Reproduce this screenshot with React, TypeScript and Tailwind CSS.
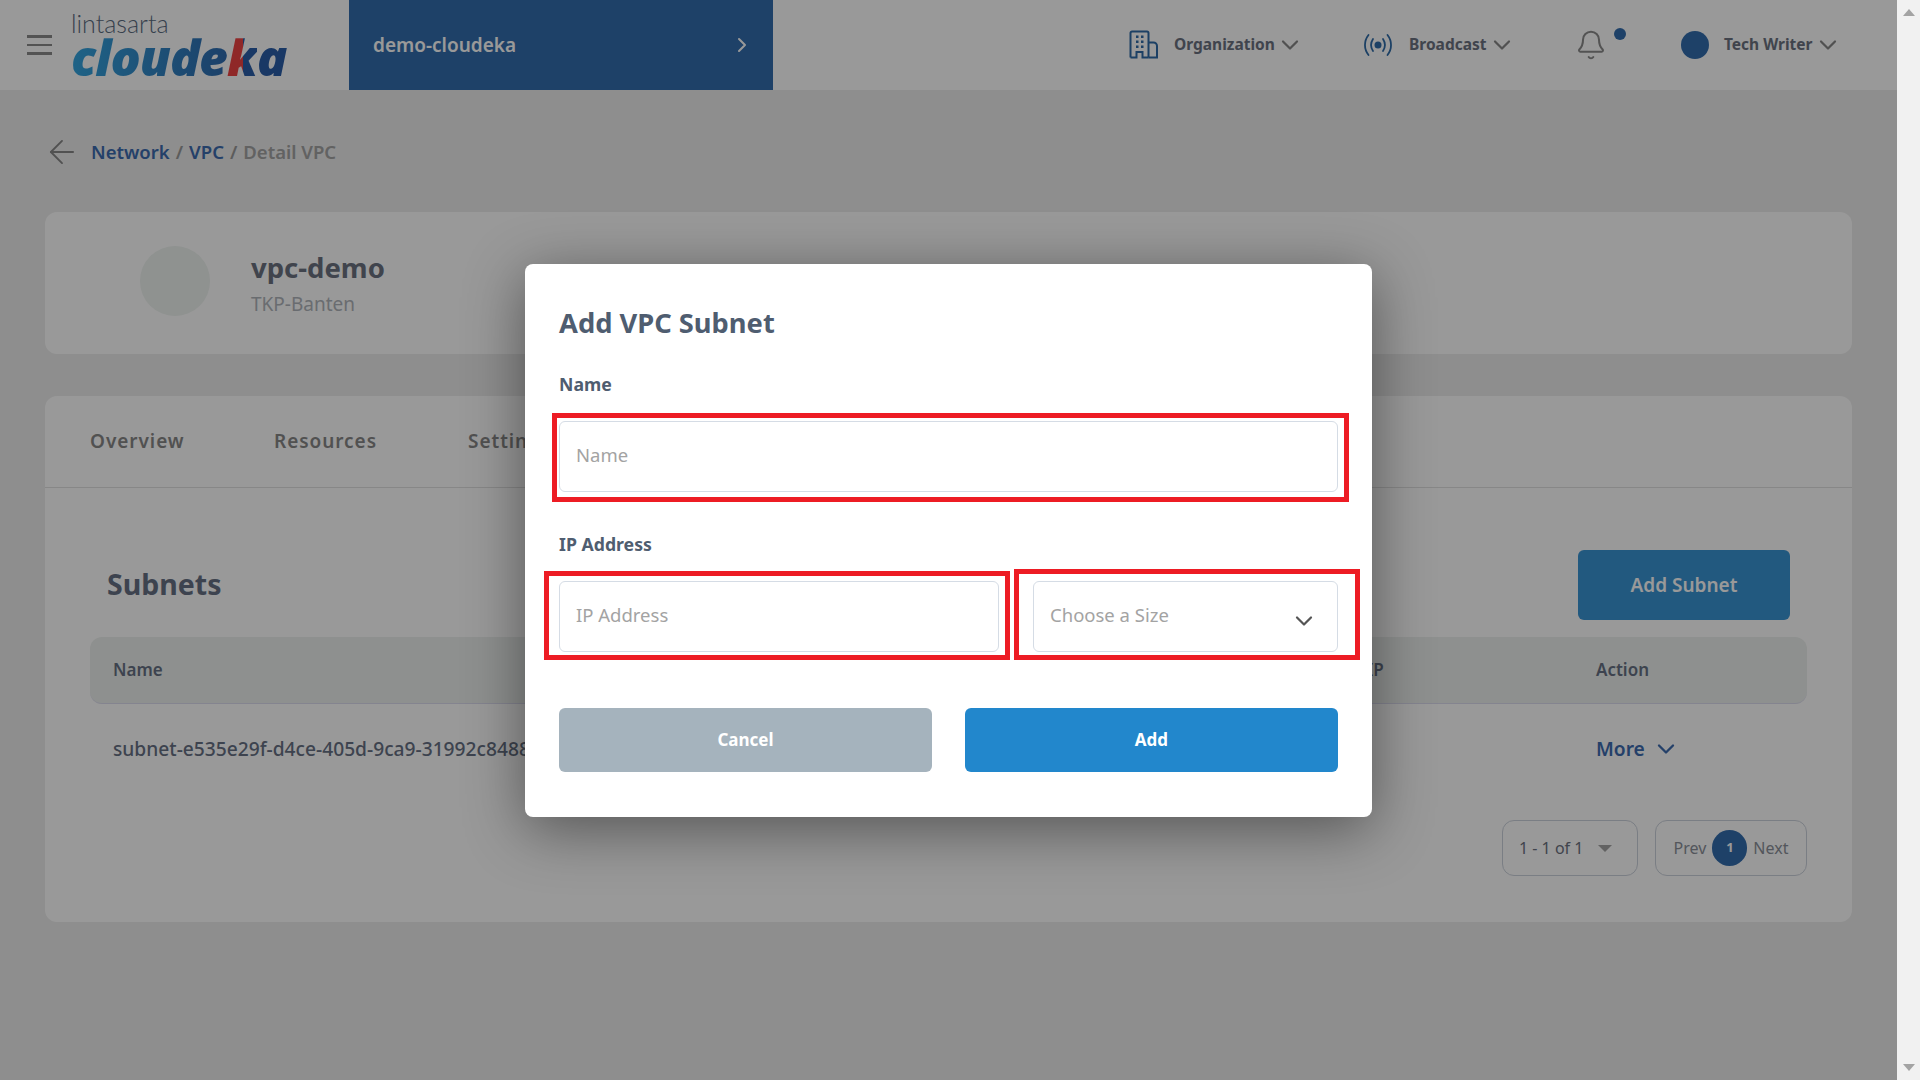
import { ArrowLeft, Bell, ChevronDown, ChevronRight } from 'lucide-react';

const FONT = "font-['Noto_Sans',sans-serif]";

function BuildingIcon() {
  return (
    <svg width="30" height="30" viewBox="0 0 30 30" fill="none" stroke="#2f6ca8" strokeWidth="2" className="shrink-0">
      <path d="M1.5 27.5V3a1.5 1.5 0 0 1 1.5-1.5h15a1.5 1.5 0 0 1 1.500 1.500V27.500" />
      <path d="M19.500 12.500h5a3.500 3.500 0 0 1 3.500 3.500v11.500H19.500" />
      <path d="M1.500 27.500h6V22h6v5.500h6" />
      <g stroke="none" fill="#2f6ca8">
        <rect x="7" y="5.500" width="2.500" height="2.500" />
        <rect x="12" y="5.500" width="2.500" height="2.500" />
        <rect x="7" y="10.500" width="2.500" height="2.500" />
        <rect x="12" y="10.500" width="2.500" height="2.500" />
        <rect x="7" y="15.500" width="2.500" height="2.500" />
        <rect x="12" y="15.500" width="2.500" height="2.500" />
      </g>
    </svg>
  );
}

function BroadcastIcon() {
  return (
    <svg width="30" height="24" viewBox="0 0 30 24" fill="none" stroke="#2f6ca8" strokeWidth="1.800" strokeLinecap="round" className="shrink-0">
      <path d="M5.500 2C.800 8 .800 16 5.500 22" />
      <path d="M10 6c-2.600 4-2.600 8 0 12" />
      <path d="M20 6c2.600 4 2.600 8 0 12" />
      <path d="M24.500 2c4.700 6 4.700 14 0 20" />
      <circle cx="15" cy="12" r="3.500" fill="#2f6ca8" stroke="none" />
    </svg>
  );
}

function Logo() {
  return (
    <div className="flex flex-col ml-[19px] w-[230px]">
      <span className="font-['Lato',sans-serif] font-light text-[25px] leading-[26px] text-[#5b6b7f] mt-[-1px]">lintasarta</span>
      <span className="font-['Open_Sans',sans-serif] font-extrabold italic text-[50px] leading-[44px] tracking-[-1px] whitespace-nowrap mt-[-1px]">
        <span className="bg-[linear-gradient(90deg,#34a5e0,#2f6cb0)] bg-clip-text text-transparent">cloude</span>
        <span className="bg-[linear-gradient(90deg,#ef4444_52%,#2b5ea8_52%)] bg-clip-text text-transparent">k</span>
        <span className="text-[#2b5ea8]">a</span>
      </span>
    </div>
  );
}

function HeaderChevron() {
  return <ChevronDown size={28} strokeWidth={1.900} className="ml-[1px] text-[#888] shrink-0" />;
}

function Header() {
  return (
    <header className="h-[90px] bg-white flex items-center shrink-0">
      <div className="w-[349px] flex items-center pl-[27px] shrink-0">
        <div className="flex flex-col gap-[6px] w-[25px]">
          <div className="h-[2.500px] bg-[#8a8a8a]" />
          <div className="h-[2.500px] bg-[#8a8a8a]" />
          <div className="h-[2.500px] bg-[#8a8a8a]" />
        </div>
        <Logo />
      </div>
      <div className="w-[424px] h-full bg-[#336dae] flex items-center justify-between pl-6 pr-[19px] text-white font-semibold text-[19px]">
        <span>demo-cloudeka</span>
        <ChevronRight size={24} strokeWidth={2} />
      </div>
      <div className="flex-1 flex items-center text-[#6b7280] font-bold text-[15.500px]">
        <div className="flex items-center ml-[356px] w-[234px]">
          <BuildingIcon />
          <span className="ml-[15px]">Organization</span>
          <HeaderChevron />
        </div>
        <div className="flex items-center w-[215px]">
          <BroadcastIcon />
          <span className="ml-[16px]">Broadcast</span>
          <HeaderChevron />
        </div>
        <div className="flex items-start w-[103px]">
          <Bell size={32} strokeWidth={1.500} className="text-[#8a8a8a] -ml-[3px]" />
          <div className="w-3 h-3 rounded-full bg-[#336dae] ml-[7px] -mt-[1px]" />
        </div>
        <div className="w-7 h-7 rounded-full bg-[#336dae]" />
        <span className="ml-[15px]">Tech Writer</span>
        <HeaderChevron />
      </div>
    </header>
  );
}

function Page() {
  return (
    <main className="flex-1 flex flex-col bg-[#ededed]">
      <Header />
      <div className="h-[122px] flex items-center pl-[43px] pt-[2px] text-[18.500px] font-semibold shrink-0">
        <ArrowLeft size={38} strokeWidth={1.200} className="text-[#888]" />
        <span className="ml-[10px] text-[#3c6bb0]">Network</span>
        <span className="mx-[6px] text-[#999]">/</span>
        <span className="text-[#3c6bb0]">VPC</span>
        <span className="mx-[6px] text-[#999]">/</span>
        <span className="text-[#a3a3a3]">Detail VPC</span>
      </div>

      <section className="mx-[45px] h-[142px] bg-white rounded-xl flex items-start pt-[34px] pl-[95px]">
        <div className="w-[70px] h-[70px] rounded-full bg-[#eef3f0]" />
        <div className="ml-[41px]">
          <h1 className="text-[27.500px] leading-[34px] font-bold text-[#6b7280] mt-[5px]">vpc-demo</h1>
          <p className="text-[19px] leading-[26px] text-[#b0b5bb] mt-[6px]">TKP-Banten</p>
        </div>
      </section>

      <section className="mx-[45px] mt-[42px] h-[526px] bg-white rounded-xl flex flex-col">
        <div className="h-[92px] border-b border-[#e2e2e2] flex items-start pt-[32px] pl-[45px] text-[19px] leading-[26px] font-semibold tracking-[0.05em] text-[#888]">
          <span className="w-[184px]">Overview</span>
          <span className="w-[194px]">Resources</span>
          <span>Settings</span>
        </div>
        <div className="relative flex items-center justify-between pl-[62px] pr-[62px] pt-[62px] pb-[17px]">
          <h2 className="text-[28.500px] leading-[40px] font-bold text-[#677184] -mt-[2px]">Subnets</h2>
          <button className="w-[212px] h-[70px] bg-[#3a94d4] rounded-md text-white font-semibold text-[19px]">Add Subnet</button>
        </div>
        <div className="mx-[45px] h-[67px] bg-[#edf1ee] rounded-xl border-b border-[#dde] flex items-center text-[#677184] font-semibold text-[17px]">
          <span className="ml-[23px] w-[1254px]">Name</span>
          <span className="w-[229px]">IP</span>
          <span>Action</span>
        </div>
        <div className="mx-[45px] h-[90px] flex items-center text-[19.200px] font-medium text-[#677184]">
          <span className="ml-[23px] w-[1483px] whitespace-nowrap">subnet-e535e29f-d4ce-405d-9ca9-31992c8488</span>
          <span className="flex items-center text-[#3c6bb0] font-semibold">
            More
            <ChevronDown size={28} strokeWidth={2} className="ml-[7px]" />
          </span>
        </div>
        <div className="flex justify-end gap-[17px] mr-[45px] mt-[26px]">
          <div className="w-[136px] h-[56px] rounded-xl border border-[#ccd2dc] flex items-center pl-[16px] text-[#6b7280] text-[16px]">
            1 - 1 of 1
            <div className="ml-[15px] w-0 h-0 border-x-[7px] border-x-transparent border-t-[7px] border-t-[#a3a3a3]" />
          </div>
          <div className="w-[152px] h-[56px] rounded-xl border border-[#ccd2dc] flex items-center justify-center gap-[6px] text-[#8a8f99] text-[16px]">
            <span>Prev</span>
            <span className="w-[35px] h-[36px] rounded-full bg-[#336dae] text-white font-bold text-[13px] flex items-center justify-center">1</span>
            <span>Next</span>
          </div>
        </div>
      </section>
    </main>
  );
}

function Field({ placeholder, className }: { placeholder: string; className: string }) {
  return (
    <div className={`h-[71px] rounded-md border border-[#d5dce5] flex items-center pl-[16px] pb-[2px] text-[18.500px] text-[#a3a3a3] ${className}`}>
      {placeholder}
    </div>
  );
}

function Modal() {
  return (
    <div className="relative w-[847px] h-[553px] bg-white rounded-lg px-[34px] pt-[39px] shadow-[0_12px_60px_rgba(0,0,0,0.45)]">
      <h2 className="text-[27.300px] leading-[40px] font-bold text-[#4f5d70]">Add VPC Subnet</h2>
      <label className="block mt-[29px] text-[17.700px] leading-[24px] font-bold text-[#4f5d70]">Name</label>
      <Field placeholder="Name" className="mt-[25px]" />
      <label className="block mt-[40px] text-[17.700px] leading-[24px] font-bold text-[#4f5d70]">IP Address</label>
      <div className="flex justify-between mt-[25px]">
        <Field placeholder="IP Address" className="w-[440px]" />
        <div className="relative w-[305px]">
          <Field placeholder="Choose a Size" className="w-full" />
          <ChevronDown size={28} strokeWidth={1.900} className="absolute right-[20px] top-[26px] text-[#555]" />
        </div>
      </div>
      <div className="flex justify-between mt-[56px]">
        <button className="w-[373px] h-[64px] rounded-md bg-[#a5b3bd] text-white font-bold text-[17px]">Cancel</button>
        <button className="w-[373px] h-[64px] rounded-md bg-[#2287cc] text-white font-bold text-[17px]">Add</button>
      </div>

      {/* red annotation boxes from the screenshot */}
      <div className="absolute left-[27px] top-[149px] w-[797px] h-[89px] border-[5px] border-[#ed1c24]" />
      <div className="absolute left-[19px] top-[307px] w-[466px] h-[89px] border-[5px] border-[#ed1c24]" />
      <div className="absolute left-[489px] top-[305px] w-[346px] h-[91px] border-[5px] border-[#ed1c24]" />
    </div>
  );
}

export default function App() {
  return (
    <div className={`relative w-[1920px] h-[1080px] overflow-hidden flex ${FONT}`}>
      <div className="relative w-[1897px] h-full flex">
        <Page />
        <div className="absolute inset-0 bg-black/40 flex items-center justify-center">
          <Modal />
        </div>
      </div>
      <div className="flex-1 bg-[#f1f1f1] flex flex-col items-center justify-between py-[9px]">
        <div className="w-0 h-0 border-x-[6px] border-x-transparent border-b-[7px] border-b-[#a3a3a3]" />
        <div className="w-0 h-0 border-x-[6px] border-x-transparent border-t-[7px] border-t-[#a3a3a3]" />
      </div>
    </div>
  );
}
